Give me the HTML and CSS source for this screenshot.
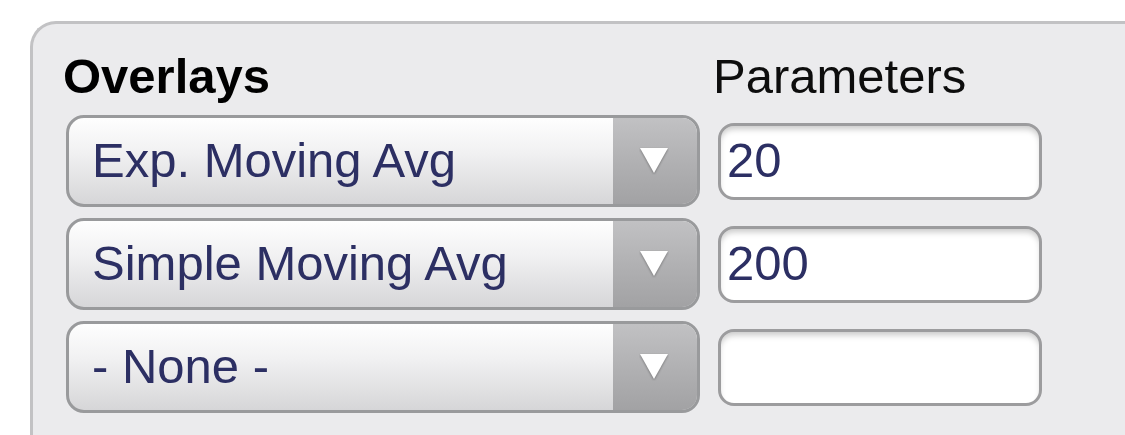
FILE: index.html
```html
<!DOCTYPE html>
<html>
<head>
<meta charset="utf-8">
<link rel="stylesheet" href="styles.css">
</head>
<body>
<div class="panel">
  <div class="grid">
    <div class="head head-left">Overlays</div>
    <div class="head head-right">Parameters</div>

    <div class="select">
      <span class="select-label">Exp. Moving Avg</span>
      <span class="select-arrow"><svg width="30" height="28" viewBox="0 0 30 28"><polygon points="1,1 29,1 15,26" class="tri"/></svg></span>
    </div>
    <div class="field"><input class="param" type="text" value="20"></div>

    <div class="select">
      <span class="select-label">Simple Moving Avg</span>
      <span class="select-arrow"><svg width="30" height="28" viewBox="0 0 30 28"><polygon points="1,1 29,1 15,26" class="tri"/></svg></span>
    </div>
    <div class="field"><input class="param" type="text" value="200"></div>

    <div class="select">
      <span class="select-label">- None -</span>
      <span class="select-arrow"><svg width="30" height="28" viewBox="0 0 30 28"><polygon points="1,1 29,1 15,26" class="tri"/></svg></span>
    </div>
    <div class="field"><input class="param" type="text" value=""></div>
  </div>
</div>
</body>
</html>
```

FILE: styles.css
```css
html, body {
  margin: 0;
  padding: 0;
  background: #ffffff;
  overflow: hidden;
  width: 1125px;
  height: 435px;
}

body {
  font-family: "Liberation Sans", Arial, Helvetica, sans-serif;
  padding-top: 21px;
  padding-left: 30px;
  box-sizing: border-box;
}

.panel {
  box-sizing: border-box;
  width: 1095px;
  height: 414px;
  background: #ebebed;
  border-top: 3px solid #c2c2c4;
  border-left: 3px solid #c2c2c4;
  border-radius: 26px 0 0 0;
  padding: 24px 0 0 33px;
}

.grid {
  display: grid;
  grid-template-columns: 634px 324px;
  column-gap: 18px;
  row-gap: 11px;
  align-items: center;
}

.head {
  font-size: 49px;
  line-height: 56px;
  height: 56px;
  color: #000000;
}

.head-left {
  font-weight: bold;
  margin-left: -3px;
}

.head-right {
  margin-left: -5px;
  color: #0d0d0d;
}

.select {
  box-sizing: border-box;
  height: 92px;
  border: 3px solid #999a9c;
  border-radius: 18px;
  display: flex;
  overflow: hidden;
  background: linear-gradient(to bottom, #fefefe 0%, #f1f1f2 40%, #d6d6d8 100%);
}

.select-label {
  flex: 1;
  display: flex;
  align-items: center;
  padding-left: 23px;
  font-size: 49px;
  color: #2c2f63;
  padding-bottom: 2px;
}

.select-arrow {
  width: 82px;
  display: flex;
  align-items: center;
  justify-content: center;
  padding-right: 2px;
  background: linear-gradient(to bottom, #c1c1c3 0%, #b1b1b3 50%, #a2a2a4 100%);
}

.tri {
  fill: #ffffff;
  filter: drop-shadow(0 1.5px 1px rgba(0, 0, 0, 0.35));
}

.field {
  display: flex;
}

.param {
  box-sizing: border-box;
  width: 324px;
  height: 77px;
  margin: 0;
  border: 3px solid #9c9c9e;
  border-radius: 16px;
  background: #ffffff;
  box-shadow: inset 0 5px 6px -2px rgba(0, 0, 0, 0.22);
  padding: 0 0 2px 6px;
  font-family: "Liberation Sans", Arial, Helvetica, sans-serif;
  font-size: 49px;
  color: #2c2f63;
  outline: none;
}
```
